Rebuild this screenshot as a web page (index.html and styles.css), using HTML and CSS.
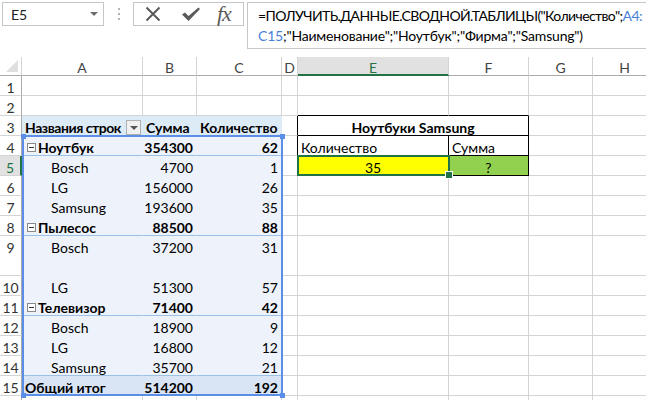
FILE: index.html
```html
<!DOCTYPE html>
<html lang="ru">
<head>
<meta charset="utf-8">
<title>Excel</title>
<link rel="stylesheet" href="styles.css">
</head>
<body>
<div class="app">
  <div class="toolbar">
    <div class="namebox"><span class="nb-text">E5</span><span class="caret"></span></div>
    <div class="dots"><i></i><i></i><i></i></div>
    <div class="fbtns">
      <svg class="ic-x" width="16" height="16" viewBox="0 0 16 16"><path d="M1.5 1.5 L14.5 14.5 M14.5 1.5 L1.5 14.5" stroke="#5a5a5a" stroke-width="2" fill="none"/></svg>
      <svg class="ic-ok" width="20" height="16" viewBox="0 0 20 16"><path d="M1 8.5 L4 6.5 L7.5 10 L17.5 1.5 L19 3 L7.5 15 Z" fill="#5a5a5a"/></svg>
      <span class="fx">fx</span>
    </div>
    <div class="formula">
      <div class="fl fl1">=ПОЛУЧИТЬ.ДАННЫЕ.СВОДНОЙ.ТАБЛИЦЫ("Количество";<span class="ref-t">A4:</span></div>
      <div class="fl"><span class="ref-t">C15</span>;"Наименование";"Ноутбук";"Фирма";"Samsung")</div>
    </div>
  </div>

  <div class="sheet">
    <!-- header -->
    <div class="c h corner"><span class="tri"></span></div>
    <div class="c h">A</div>
    <div class="c h">B</div>
    <div class="c h">C</div>
    <div class="c h">D</div>
    <div class="c h hsel">E</div>
    <div class="c h">F</div>
    <div class="c h">G</div>
    <div class="c h">H</div>

    <!-- row 1 -->
    <div class="c r">1</div>
    <div class="c"></div><div class="c"></div><div class="c"></div><div class="c"></div><div class="c"></div><div class="c"></div><div class="c"></div><div class="c"></div>

    <!-- row 2 -->
    <div class="c r">2</div>
    <div class="c"></div><div class="c"></div><div class="c"></div><div class="c"></div><div class="c bb"></div><div class="c bb"></div><div class="c"></div><div class="c"></div>

    <!-- row 3 -->
    <div class="c r">3</div>
    <div class="c pv ph"><span class="ph-t">Названия строк</span><span class="fbtn"><span class="fcaret"></span></span></div>
    <div class="c pv ph left">Сумма</div>
    <div class="c pv ph left">Количество</div>
    <div class="c br"></div>
    <div class="c span2 bold center bb br">Ноутбуки Samsung</div>
    <div class="c"></div>
    <div class="c"></div>

    <!-- row 4 -->
    <div class="c r">4</div>
    <div class="c pv cat"><span class="minus"></span>Ноутбук</div>
    <div class="c pv cat num">354300</div>
    <div class="c pv cat num">62</div>
    <div class="c br"></div>
    <div class="c bb br">Количество</div>
    <div class="c bb br left3">Сумма</div>
    <div class="c"></div>
    <div class="c"></div>

    <!-- row 5 -->
    <div class="c r rsel">5</div>
    <div class="c pv item">Bosch</div>
    <div class="c pv num">4700</div>
    <div class="c pv num">1</div>
    <div class="c br"></div>
    <div class="c yellow center bb br">35</div>
    <div class="c green center bb br">?</div>
    <div class="c"></div>
    <div class="c"></div>

    <!-- row 6 -->
    <div class="c r">6</div>
    <div class="c pv item">LG</div>
    <div class="c pv num">156000</div>
    <div class="c pv num">26</div>
    <div class="c"></div><div class="c"></div><div class="c"></div><div class="c"></div><div class="c"></div>

    <!-- row 7 -->
    <div class="c r">7</div>
    <div class="c pv item">Samsung</div>
    <div class="c pv num">193600</div>
    <div class="c pv num">35</div>
    <div class="c"></div><div class="c"></div><div class="c"></div><div class="c"></div><div class="c"></div>

    <!-- row 8 -->
    <div class="c r">8</div>
    <div class="c pv cat"><span class="minus"></span>Пылесос</div>
    <div class="c pv cat num">88500</div>
    <div class="c pv cat num">88</div>
    <div class="c"></div><div class="c"></div><div class="c"></div><div class="c"></div><div class="c"></div>

    <!-- row 9 (tall) -->
    <div class="c r top">9</div>
    <div class="c pv item top">Bosch</div>
    <div class="c pv num top">37200</div>
    <div class="c pv num top">31</div>
    <div class="c"></div><div class="c"></div><div class="c"></div><div class="c"></div><div class="c"></div>

    <!-- row 10 -->
    <div class="c r">10</div>
    <div class="c pv item">LG</div>
    <div class="c pv num">51300</div>
    <div class="c pv num">57</div>
    <div class="c"></div><div class="c"></div><div class="c"></div><div class="c"></div><div class="c"></div>

    <!-- row 11 -->
    <div class="c r">11</div>
    <div class="c pv cat"><span class="minus"></span>Телевизор</div>
    <div class="c pv cat num">71400</div>
    <div class="c pv cat num">42</div>
    <div class="c"></div><div class="c"></div><div class="c"></div><div class="c"></div><div class="c"></div>

    <!-- row 12 -->
    <div class="c r">12</div>
    <div class="c pv item">Bosch</div>
    <div class="c pv num">18900</div>
    <div class="c pv num">9</div>
    <div class="c"></div><div class="c"></div><div class="c"></div><div class="c"></div><div class="c"></div>

    <!-- row 13 -->
    <div class="c r">13</div>
    <div class="c pv item">LG</div>
    <div class="c pv num">16800</div>
    <div class="c pv num">12</div>
    <div class="c"></div><div class="c"></div><div class="c"></div><div class="c"></div><div class="c"></div>

    <!-- row 14 -->
    <div class="c r">14</div>
    <div class="c pv item pre">Samsung</div>
    <div class="c pv num pre">35700</div>
    <div class="c pv num pre">21</div>
    <div class="c"></div><div class="c"></div><div class="c"></div><div class="c"></div><div class="c"></div>

    <!-- row 15 -->
    <div class="c r">15</div>
    <div class="c pv tot">Общий итог</div>
    <div class="c pv tot num">514200</div>
    <div class="c pv tot num">192</div>
    <div class="c"></div><div class="c"></div><div class="c"></div><div class="c"></div><div class="c"></div>

    <!-- row 16 (mostly hidden) -->
    <div class="c r"></div>
    <div class="c"></div><div class="c"></div><div class="c"></div><div class="c"></div><div class="c"></div><div class="c"></div><div class="c"></div><div class="c"></div>

    <!-- overlays -->
    <div class="refbox">
      <i class="hd tl"></i><i class="hd tr"></i><i class="hd bl"></i><i class="hd brc"></i>
    </div>
    <div class="selbox"><i class="fill"></i></div>
  </div>
</div>
</body>
</html>
```
FILE: styles.css
```css
html, body {
  margin: 0;
  padding: 0;
  background: #fff;
}
body {
  width: 646px;
  height: 400px;
  overflow: hidden;
  font-family: Lato, "Open Sans", "Noto Sans", sans-serif;
  color: #000;
}
.app {
  width: 646px;
  height: 400px;
  overflow: hidden;
}

/* ---------- toolbar ---------- */
.toolbar {
  height: 57px;
  display: flex;
  align-items: flex-start;
  padding-top: 2px;
  box-sizing: border-box;
}
.namebox {
  margin-left: 2px;
  width: 102px;
  height: 24px;
  box-sizing: border-box;
  border: 1px solid #c6c6c6;
  display: flex;
  align-items: center;
  justify-content: space-between;
  padding: 0 5px 0 8px;
  font-size: 14px;
  color: #222;
}
.caret {
  width: 0;
  height: 0;
  border-left: 4px solid transparent;
  border-right: 4px solid transparent;
  border-top: 4px solid #6d6d6d;
}
.dots {
  width: 29px;
  height: 24px;
  display: flex;
  flex-direction: column;
  align-items: center;
  justify-content: center;
  gap: 3px;
}
.dots i {
  display: block;
  width: 2px;
  height: 2px;
  background: #b4b4b4;
}
.fbtns {
  width: 111px;
  height: 24px;
  box-sizing: border-box;
  border: 1px solid #c6c6c6;
  display: flex;
  align-items: center;
  padding-left: 11px;
}
.ic-x { margin-right: 20px; }
.ic-ok { margin-right: 16px; }
.fx {
  font-family: "Liberation Serif", "DejaVu Serif", serif;
  font-style: italic;
  font-size: 22px;
  color: #5a5a5a;
  line-height: 20px;
  letter-spacing: -1px;
}
.formula {
  margin-left: 3px;
  flex: 1;
  height: 47px;
  box-sizing: border-box;
  border: 1px solid #c6c6c6;
  border-right: none;
  padding: 3px 0 0 10px;
  font-size: 14px;
  letter-spacing: -0.2px;
  line-height: 20px;
  white-space: nowrap;
  overflow: hidden;
  color: #000;
}
.fl1 { letter-spacing: -0.6px; }
.ref-t { color: #4a7fd8; }

/* ---------- sheet ---------- */
.sheet {
  position: relative;
  display: grid;
  grid-template-columns: 22px 121px 54px 85px 16px 151px 80px 64px 64px;
  grid-template-rows: 19px repeat(8, 20px) 40px repeat(6, 20px) 20px;
  font-size: 14px;
}
.c {
  box-sizing: border-box;
  border-right: 1px solid #d4d4d4;
  border-bottom: 1px solid #d4d4d4;
  display: flex;
  align-items: flex-end;
  padding: 0 3px 0 3px;
  line-height: 15px;
  white-space: nowrap;
  overflow: hidden;
}
.h {
  align-items: center;
  justify-content: center;
  padding: 2px 0 0 0;
  color: #444;
  font-size: 14px;
  border-right-color: #d4d4d4;
  border-bottom-color: #ababab;
}
.hsel {
  background: #e1e1e1;
  color: #217346;
  border-bottom: 2px solid #217346;
  padding-top: 3px;
}
.corner {
  position: relative;
  border-bottom-color: #ababab;
}
.tri {
  position: absolute;
  right: 3px;
  bottom: 3px;
  width: 0;
  height: 0;
  border-left: 12px solid transparent;
  border-bottom: 12px solid #dfdfdf;
}
.r {
  justify-content: center;
  padding: 0;
  color: #333;
  border-right-color: #ababab;
}
.rsel {
  background: #e1e1e1;
  color: #217346;
  border-right: 2px solid #217346;
}
.top { align-items: flex-start; padding-top: 4px; }

/* pivot */
.pv {
  background: #eef3fb;
  border-right-color: transparent;
  border-bottom-color: transparent;
}
.ph {
  background: #ddebf7;
  font-weight: bold;
  justify-content: space-between;
  padding-right: 1px;
}
.ph-t { letter-spacing: -0.45px; }
.ph.left { justify-content: flex-start; padding-left: 3px; }
.fbtn {
  width: 15px;
  height: 15px;
  box-sizing: border-box;
  border: 1px solid #b0b0b0;
  background: #f0f0f0;
  display: flex;
  align-items: center;
  justify-content: center;
  margin-left: auto;
  margin-bottom: 0;
  align-self: flex-end;
}
.fcaret {
  width: 0;
  height: 0;
  border-left: 4px solid transparent;
  border-right: 4px solid transparent;
  border-top: 4px solid #555;
}
.cat {
  font-weight: bold;
  border-bottom: 1px solid #9bc2e6;
}
.minus {
  position: relative;
  width: 9px;
  height: 9px;
  box-sizing: border-box;
  border: 1px solid #8a8a8a;
  background: #fff;
  margin: 0 2px 3px 2px;
  flex: none;
}
.minus::after {
  content: "";
  position: absolute;
  left: 1px;
  top: 3px;
  width: 5px;
  height: 1px;
  background: #333;
}
.item { padding-left: 29px; }
.num { justify-content: flex-end; padding-right: 3px; }
.pre { border-bottom: 1px solid #9bc2e6; }
.tot {
  background: #d9e5f5;
  font-weight: bold;
}

/* right table */
.span2 { grid-column: span 2; }
.bold { font-weight: bold; }
.center { justify-content: center; }
.bb { border-bottom-color: #000; }
.br { border-right-color: #000; }
.left3 { padding-left: 3px; }
.yellow { background: #ffff00; }
.green { background: #92d050; }

/* overlays */
.refbox {
  position: absolute;
  left: 22px;
  top: 78px;
  width: 261px;
  height: 261px;
  box-sizing: border-box;
  border: 2px solid #5b8ee6;
}
.hd {
  position: absolute;
  width: 5px;
  height: 5px;
  background: #5b8ee6;
}
.hd.tl { left: -3.5px; top: -3.5px; }
.hd.tr { right: -3.5px; top: -3.5px; }
.hd.bl { left: -3.5px; bottom: -3.5px; }
.hd.brc { right: -3.5px; bottom: -3.5px; }
.selbox {
  position: absolute;
  left: 297px;
  top: 98px;
  width: 153px;
  height: 21px;
  box-sizing: border-box;
  border: 2px solid #217346;
}
.fill {
  position: absolute;
  right: -5px;
  bottom: -5px;
  width: 6px;
  height: 6px;
  background: #217346;
  border: 1px solid #fff;
}
```
